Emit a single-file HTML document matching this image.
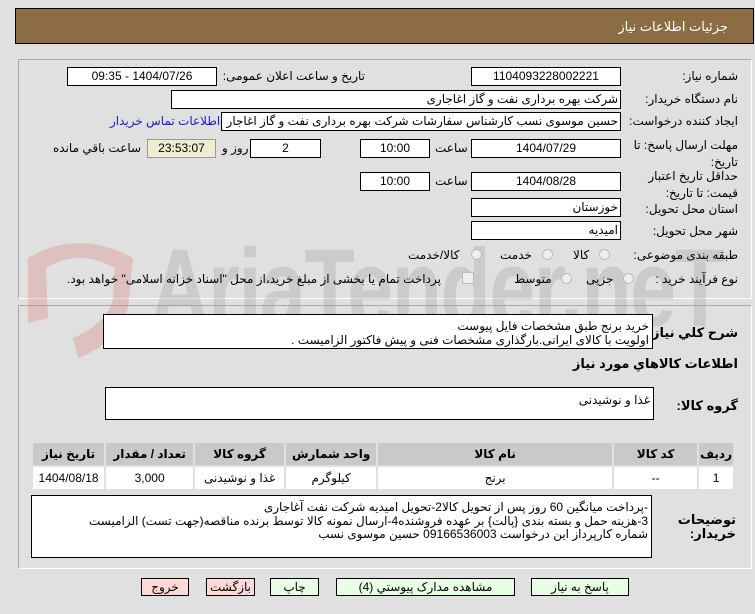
<!DOCTYPE html>
<html><head><meta charset="utf-8"><style>
body{margin:0;width:755px;height:614px;background:#e0e0e0;font-family:"Liberation Sans","DejaVu Sans",sans-serif;font-size:12px;color:#000;position:relative;overflow:hidden;direction:rtl}
.a{position:absolute;white-space:nowrap}
.hdr{left:15px;top:8px;width:737px;height:34px;background:#8c6c42;border:1px solid #000}
.pnl{border:1px solid #aaa;border-right-color:#fff;border-bottom-color:#fff}
.box{background:#fff;border:1px solid #000;box-sizing:border-box;text-align:center;line-height:17px;height:19px}
.l{text-align:right}
.r{width:11px;height:11px;border-radius:50%;border:1px solid #bbb;background:#eee;box-sizing:border-box}
.ta{background:#fff;border:1px solid #000;box-sizing:border-box;padding:3px 3px;line-height:14px;text-align:right}
.btn{height:18px;box-sizing:border-box;border:1px solid #000;text-align:center;line-height:16px;background:#e8ffe6}
.pk{background:#ffd8d8}
table{border-collapse:collapse;position:absolute;left:31px;top:441px;width:704px;direction:rtl}
td{border:2px solid #e0e0e0;text-align:center;height:20px;font-size:12px}
th{border:2px solid #e0e0e0;background:#c9c9c9;height:20px;font-size:12px}
.b{font-weight:bold}
.wm{position:absolute;left:150px;top:225px;font-size:110px;font-weight:bold;color:rgba(150,150,150,0.28);direction:ltr;font-family:"Liberation Sans Narrow","Liberation Sans",sans-serif;transform:scaleX(0.75);transform-origin:left top;letter-spacing:-2px}
</style></head><body>
<div class="a hdr"></div>
<div class="a" style="right:27px;top:19px;color:#fff;font-size:13px">جزئیات اطلاعات نیاز</div>
<div class="a pnl" style="left:18px;top:59px;width:732px;height:238px"></div>
<div class="a pnl" style="left:18px;top:305px;width:732px;height:262px"></div>
<div class="wm">AriaTender.neT</div>
<svg class="a" style="left:18px;top:228px;direction:ltr" width="125" height="140" viewBox="0 0 125 140"><path d="M10 30 Q60 0 115 30 L110 80 Q100 115 60 130 L55 110 Q90 95 95 70 L97 40 Q60 20 28 40 L30 90 L10 95 Z" fill="rgba(220,120,120,0.3)"/></svg>

<div class="a" style="right:17px;top:69px">شماره نیاز:</div>
<div class="a box" style="left:471px;top:67px;width:150px">1104093228002221</div>
<div class="a" style="right:390px;top:69px">تاریخ و ساعت اعلان عمومی:</div>
<div class="a box" style="left:67px;top:67px;width:150px">1404/07/26 - 09:35</div>

<div class="a" style="right:17px;top:92px">نام دستگاه خریدار:</div>
<div class="a box l" style="left:171px;top:90px;width:450px;padding-right:2px">شرکت بهره برداری نفت و گاز اغاجاری</div>

<div class="a" style="right:17px;top:114px">ایجاد کننده درخواست:</div>
<div class="a box l" style="left:221px;top:112px;width:400px;padding-right:2px;overflow:hidden">حسین موسوی نسب کارشناس سفارشات شرکت بهره برداری نفت و گاز اغاجار</div>
<div class="a" style="left:110px;top:114px;color:#1a1ad0">اطلاعات تماس خریدار</div>

<div class="a" style="right:17px;top:137px;line-height:17px;text-align:right">مهلت ارسال پاسخ: تا<br>تاریخ:</div>
<div class="a box" style="left:471px;top:139px;width:150px">1404/07/29</div>
<div class="a" style="left:435px;top:141px">ساعت</div>
<div class="a box" style="left:360px;top:139px;width:70px">10:00</div>
<div class="a box" style="left:250px;top:139px;width:71px">2</div>
<div class="a" style="left:222px;top:141px">روز و</div>
<div class="a box" style="left:147px;top:139px;width:69px;background:#efecd0;border-color:#999">23:53:07</div>
<div class="a" style="left:53px;top:141px">ساعت باقي مانده</div>

<div class="a" style="right:17px;top:168px;line-height:17px;text-align:right">حداقل تاریخ اعتبار<br>قیمت: تا تاریخ:</div>
<div class="a box" style="left:471px;top:172px;width:150px">1404/08/28</div>
<div class="a" style="left:435px;top:174px">ساعت</div>
<div class="a box" style="left:360px;top:172px;width:70px">10:00</div>

<div class="a" style="right:17px;top:202px">استان محل تحویل:</div>
<div class="a box l" style="left:471px;top:198px;width:150px;padding-right:2px">خوزستان</div>
<div class="a" style="right:17px;top:224px">شهر محل تحویل:</div>
<div class="a box l" style="left:471px;top:221px;width:150px;padding-right:2px">امیدیه</div>

<div class="a" style="right:17px;top:248px">طبقه بندی موضوعی:</div>
<div class="a r" style="left:599px;top:249px"></div><div class="a" style="left:573px;top:248px">کالا</div>
<div class="a r" style="left:542px;top:249px"></div><div class="a" style="left:500px;top:248px">خدمت</div>
<div class="a r" style="left:471px;top:249px"></div><div class="a" style="left:408px;top:248px">کالا/خدمت</div>

<div class="a" style="right:17px;top:272px">نوع فرآیند خرید :</div>
<div class="a r" style="left:623px;top:273px"></div><div class="a" style="left:586px;top:272px">جزیی</div>
<div class="a r" style="left:561px;top:273px"></div><div class="a" style="left:514px;top:272px">متوسط</div>
<div class="a" style="left:462px;top:272px;width:10px;height:10px;border:1px solid #bbb;background:#eee"></div>
<div class="a" style="left:67px;top:272px">پرداخت تمام یا بخشی از مبلغ خرید،از محل "اسناد خزانه اسلامی" خواهد بود.</div>

<div class="a b" style="right:17px;top:325px;font-size:13px">شرح کلي نیاز:</div>
<div class="a ta" style="left:103px;top:314px;width:550px;height:35px;padding-top:4px">خرید برنج طبق مشخصات فایل پیوست<br>اولویت با کالای ایرانی.بارگذاری مشخصات فنی و پیش فاکتور الزامیست .</div>
<div class="a b" style="right:17px;top:356px;font-size:13px">اطلاعات کالاهاي مورد نیاز</div>

<div class="a b" style="right:17px;top:398px;font-size:13px">گروه کالا:</div>
<div class="a ta" style="left:105px;top:387px;width:549px;height:33px;padding-top:5px">غذا و نوشیدنی</div>

<table>
<tr><th style="width:24px">ردیف</th><th style="width:81px">کد کالا</th><th style="width:232px">نام کالا</th><th style="width:88px">واحد شمارش</th><th style="width:87px">گروه کالا</th><th style="width:85px">تعداد / مقدار</th><th>تاریخ نیاز</th></tr>
<tr style="background:#fff"><td>1</td><td>--</td><td>برنج</td><td>کیلوگرم</td><td>غذا و نوشیدنی</td><td>3,000</td><td>1404/08/18</td></tr>
</table>

<div class="a b" style="right:19px;top:513px;font-size:13px;line-height:14px;text-align:right">توضیحات<br>خریدار:</div>
<div class="a ta" style="left:31px;top:495px;width:621px;height:63px;padding-top:5px;line-height:13.5px">-پرداخت میانگین 60 روز پس از تحویل کالا2-تحویل امیدیه شرکت نفت آغاجاری<br>3-هزینه حمل  و بسته بندی {پالت} بر عهده فروشنده4-ارسال نمونه کالا توسط برنده مناقصه(جهت تست) الزامیست<br>شماره کارپرداز این درخواست 09166536003 حسین موسوی نسب</div>

<div class="a btn" style="left:531px;top:578px;width:98px">پاسخ به نیاز</div>
<div class="a btn" style="left:336px;top:578px;width:179px">مشاهده مدارک پیوستي (4)</div>
<div class="a btn" style="left:270px;top:578px;width:49px">چاپ</div>
<div class="a btn pk" style="left:206px;top:578px;width:49px">بازگشت</div>
<div class="a btn pk" style="left:141px;top:578px;width:48px">خروج</div>
</body></html>
